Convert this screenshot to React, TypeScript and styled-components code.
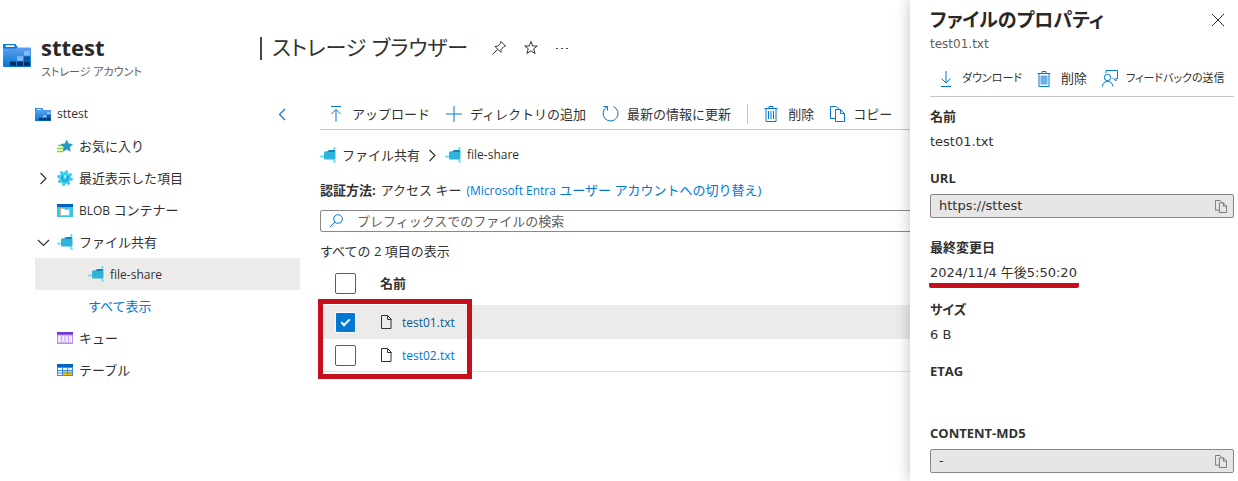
import React from 'react';
import styled, { createGlobalStyle } from 'styled-components';

const BLUE = '#0078d4';
const TEXT = '#323130';
const UI_FONT = '"Open Sans", "Noto Sans CJK JP", sans-serif';
const PANEL_FONT = '"DejaVu Sans", "Noto Sans CJK JP", sans-serif';

const GlobalStyle = createGlobalStyle`
  *, *::before, *::after { box-sizing: border-box; }
  body {
    margin: 0;
    background: #fff;
    color: ${TEXT};
    font: 13px/20px ${UI_FONT};
    overflow-x: hidden;
  }
  button { margin: 0; border: 0; padding: 0; background: none; font: inherit; color: inherit; text-align: left; }
  button, a { cursor: pointer; }
  h1, h2, p, ul, dl, dd { margin: 0; padding: 0; }
  svg { display: block; flex: none; }
`;

const Page = styled.div`
  position: relative;
  min-height: 100vh;
  overflow: hidden;
`;

const Header = styled.header`
  display: flex;
  align-items: flex-start;
  height: 98px;
  padding: 35px 0 0 3px;
`;

const ResourceIcon = styled.div`
  width: 38px;
  padding-top: 9px;
`;

const Resource = styled.div`
  width: 215px;
`;

const ResourceName = styled.h1`
  font-size: 22px;
  line-height: 25px;
  font-weight: 700;
  color: #292827;
`;

const ResourceKind = styled.p`
  font-size: 11px;
  line-height: 24px;
  font-feature-settings: 'palt';
  color: #605e5c;
`;

const BladeTitle = styled.h2`
  display: flex;
  gap: 10px;
  font-size: 21px;
  line-height: 25px;
  font-weight: 400;
  font-feature-settings: 'palt';
  white-space: nowrap;
`;

const Divider = styled.span`
  width: 2px;
  height: 23px;
  margin: 2px 0 0 4px;
  background: #484644;
`;

const HeaderActions = styled.div`
  display: flex;
  align-items: center;
  gap: 16px;
  height: 25px;
  margin-left: 23px;
`;

const Body = styled.div`
  display: flex;
  align-items: flex-start;
  gap: 20px;
  padding-left: 35px;
`;

const Sidebar = styled.nav`
  flex: none;
  width: 265px;
`;

const TreeHead = styled.div`
  display: flex;
  align-items: center;
  justify-content: space-between;
  height: 32px;
  padding-right: 11px;
`;

const Latin = styled.span`
  font-size: 12px;
`;

const TreeRoot = styled.button`
  display: flex;
  align-items: center;
  gap: 6px;
`;

const TreeItem = styled.button<{ $depth?: number; $selected?: boolean; $link?: boolean }>`
  display: flex;
  align-items: center;
  width: 100%;
  height: 32px;
  padding-left: ${(p) => (p.$depth === 2 ? 31 : 0)}px;
  background: ${(p) => (p.$selected ? '#edebe9' : 'transparent')};
  color: ${(p) => (p.$link ? BLUE : TEXT)};
`;

const TreeChevron = styled.span`
  width: 22px;
  padding-left: 2px;
`;

const TreeIcon = styled.span`
  width: 22px;
`;

const Main = styled.main`
  flex: 1;
  min-width: 0;
`;

const Toolbar = styled.div`
  display: flex;
  align-items: center;
  height: 32px;
  border-bottom: 1px solid #c8c6c4;
  white-space: nowrap;
`;

const ToolButton = styled.button<{ $gap?: number }>`
  display: flex;
  align-items: center;
  gap: ${(p) => p.$gap ?? 8}px;
  white-space: nowrap;
`;

const MainToolbar = styled(Toolbar)`
  gap: 16px;
  padding-left: 8px;
`;

const ToolSeparator = styled.span`
  width: 1px;
  height: 20px;
  background: #c8c6c4;
`;

const Breadcrumb = styled.nav`
  display: flex;
  align-items: center;
  gap: 6px;
  padding-top: 15px;
`;

const Crumb = styled.button`
  display: flex;
  align-items: center;
  gap: 6px;
`;

const Auth = styled.p`
  display: flex;
  gap: 5px;
  padding: 15px 0 9px;
  white-space: nowrap;
`;

const Link = styled.a<{ $dark?: boolean }>`
  color: ${(p) => (p.$dark ? '#005a9e' : BLUE)};
  text-decoration: none;
`;

const Search = styled.label`
  display: flex;
  align-items: center;
  gap: 14px;
  height: 22px;
  padding-left: 8px;
  border: 1px solid #8a8886;
  border-radius: 2px;
`;

const SearchInput = styled.input`
  flex: 1;
  min-width: 0;
  border: 0;
  padding: 0;
  outline: 0;
  font: 13px/18px ${UI_FONT};
  background: none;
  &::placeholder { color: #605e5c; opacity: 1; }
`;

const Count = styled.p`
  padding: 9px 0 3px;
`;

const TableArea = styled.div`
  position: relative;
`;

const FileTable = styled.table`
  width: 100%;
  border-collapse: collapse;
  th, td { padding: 0; text-align: left; vertical-align: middle; }
  th { height: 41px; padding-bottom: 2px; }
  td { height: 33px; padding-top: 1px; border-top: 1px solid #edebe9; }
  tbody tr:last-child td { border-bottom: 1px solid #e1dfdd; }
`;

const FileRow = styled.tr<{ $selected?: boolean }>`
  background: ${(p) => (p.$selected ? '#edebe9' : 'transparent')};
`;

const CheckCell = styled.td`
  width: 60px;
`;

const Check = styled.input`
  appearance: none;
  display: block;
  width: 21px;
  height: 21px;
  margin: 0 0 0 15px;
  border: 1px solid #605e5c;
  border-radius: 2px;
  background: #fff;
  &:checked {
    border-color: #fff;
    background: ${BLUE};
  }
  &:checked::after {
    content: '';
    display: block;
    width: 9px;
    height: 5px;
    margin: 6px 0 0 5px;
    border: solid #fff;
    border-width: 0 0 2px 2px;
    transform: rotate(-45deg);
  }
`;

const FileName = styled.span`
  display: flex;
  align-items: center;
  gap: 10px;
`;

const Highlight = styled.div`
  position: absolute;
  top: 35px;
  left: -2px;
  width: 154px;
  height: 80px;
  border: 5px solid #c50f1f;
  pointer-events: none;
`;

const Panel = styled.aside`
  position: absolute;
  top: 0;
  right: 0;
  bottom: 0;
  width: 328px;
  padding: 6px 4px 0 20px;
  background: #fff;
  box-shadow: 0 0 14px rgba(0, 0, 0, 0.25);
  font: 13px/20px ${PANEL_FONT};
  overflow: hidden;
`;

const PanelHead = styled.div`
  display: flex;
  align-items: center;
  justify-content: space-between;
  padding-right: 9px;
`;

const PanelTitle = styled.h2`
  font-size: 19px;
  line-height: 28px;
  font-weight: 700;
  font-feature-settings: 'palt';
  white-space: nowrap;
  color: #292827;
`;

const PanelSubtitle = styled.p`
  font-size: 12px;
  color: #605e5c;
`;

const PanelToolbar = styled(Toolbar)`
  gap: 15px;
  height: 43px;
  padding: 7px 0 0 8px;
  font-feature-settings: 'palt';
`;

const Kana = styled.span`
  font-size: 11px;
`;

const Fields = styled.dl`
  padding-top: 7px;
`;

const Field = styled.div<{ $boxed?: boolean }>`
  padding-bottom: ${(p) => (p.$boxed ? 17 : 14)}px;
`;

const Label = styled.dt`
  margin-bottom: 4px;
  line-height: 24px;
  font-weight: 700;
  font-family: ${UI_FONT};
  font-feature-settings: 'palt';
`;

const Value = styled.dd`
  height: 20px;
`;

const Marked = styled.span`
  display: inline-block;
  margin-left: -1px;
  padding: 0 2px 0 1px;
  border-bottom: 5px solid #c50f1f;
  border-radius: 2px;
  white-space: nowrap;
`;

const CopyBox = styled.dd`
  display: flex;
  align-items: center;
  height: 24px;
  padding: 0 6px 0 8px;
  border: 1px solid #8a8886;
  border-radius: 2px;
  background: #e6e6e6;
`;

const CopyInput = styled.input`
  flex: 1;
  min-width: 0;
  border: 0;
  padding: 0;
  outline: 0;
  background: none;
  color: ${TEXT};
  font: 13px/20px ${PANEL_FONT};
`;

const StorageIcon = ({ w, h }: { w: number; h: number }) => (
  <svg width={w} height={h} viewBox="0 0 28 23" preserveAspectRatio="none">
    <defs>
      <linearGradient id="folder" x1="0" y1="0" x2="0" y2="1">
        <stop offset="0" stopColor="#5ea0ef" />
        <stop offset="1" stopColor="#0078d4" />
      </linearGradient>
    </defs>
    <path d="M0 1Q0 0 1 0H12.500L14.500 3V5H0z" fill="#0078d4" />
    <rect x="2.500" y="1.200" width="9" height="1.800" rx="0.500" fill="#fff" />
    <path d="M0 4.500h12L14 3.500h14V22q0 1-1 1H1q-1 0-1-1z" fill="url(#folder)" />
    <rect x="21" y="7" width="6" height="4.500" fill="#83b9f9" />
    <rect x="21" y="12.300" width="6" height="4.500" fill="#0058a5" />
    <rect x="14" y="12.300" width="6" height="4.500" fill="#83b9f9" />
    <rect x="7" y="17.500" width="6" height="4.500" fill="#003067" />
    <rect x="14" y="17.500" width="6" height="4.500" fill="#003067" />
    <rect x="21" y="17.500" width="6" height="4.500" fill="#003067" />
  </svg>
);

const FavoriteIcon = () => (
  <svg width="16" height="14" viewBox="0 0 16 14">
    <path d="M1 6.500h5M0 9.500h6M0 12.500h6" stroke="#86d633" strokeWidth="1.300" />
    <path d="M9.700.5l1.900 4 4.400.6-3.200 3.100.8 4.500-3.900-2.100-4 2.100.8-4.500-3.200-3.100 4.500-.6z" fill="#2599c4" />
  </svg>
);

const RecentIcon = () => (
  <svg width="16" height="16" viewBox="0 0 16 16">
    <circle cx="8" cy="8" r="6.600" fill="none" stroke="#32c8ea" strokeWidth="2.400" strokeDasharray="2.600 2.584" />
    <circle cx="8" cy="8" r="5.900" fill="#32d0f2" />
    <path d="M5.800 6a3 3 0 1 0 4.400 0" fill="none" stroke="#1c93c4" strokeWidth="1.200" />
    <path d="M8 5v3" stroke="#e4faff" strokeWidth="1.200" />
  </svg>
);

const BlobIcon = () => (
  <svg width="16" height="13" viewBox="0 0 16 13">
    <rect width="16" height="13" rx="0.500" fill="#38c6ea" />
    <rect width="16" height="3" fill="#0067c0" />
    <path d="M3.500 4.500h3.500l1 1h4.500v6h-9z" fill="#fff" stroke="#e8a878" strokeWidth="0.800" />
  </svg>
);

const ShareIcon = () => (
  <svg width="16" height="16" viewBox="0 0 16 16">
    <path d="M1.500 9.500H5M14.500 1.500L13 4M14.500 14L13.500 12" stroke="#50d8f0" strokeWidth="1.200" />
    <path d="M4 5.500q0-1 1-1l3-.5q.5-1 1.500-1h4.500q1.500 0 1.500 1.500v6.500q0 1.500-1.500 1.500H5.500Q4 12.500 4 11z" fill="#2fb4d9" />
    <path d="M8.500 3.500q.5-.5 1.500-.5h4q1 0 1.400.8L14 5H8z" fill="#1b7fb5" />
    <circle cx="1.500" cy="9.500" r="1.200" fill="#50e6ff" />
    <circle cx="14.500" cy="1.200" r="1.100" fill="#50e6ff" />
    <circle cx="14.500" cy="14.500" r="1.200" fill="#50e6ff" />
  </svg>
);

const QueueIcon = () => (
  <svg width="16" height="12" viewBox="0 0 16 12">
    <rect width="16" height="12" rx="0.500" fill="#b48df0" />
    <rect width="16" height="2.500" fill="#7339cc" />
    <rect x="1" y="3.500" width="14" height="7" fill="#efe6fd" />
    <path d="M4.500 3.500v7M8 3.500v7M11.500 3.500v7" stroke="#c5a4f5" />
  </svg>
);

const TableIcon = () => (
  <svg width="16" height="12" viewBox="0 0 16 12">
    <rect width="16" height="12" rx="0.500" fill="#3f8fdc" />
    <rect width="16" height="3" fill="#0067c0" />
    <path d="M1 4h4v2H1zM1 7h4v1.500H1zM1 9.500h4V11H1zM6 4h4v2H6zM11 4h4v2h-4z" fill="#eef6ff" />
    <path d="M6 7h4v1.500H6zM6 9.500h4V11H6zM11 7h4v1.500h-4zM11 9.500h4V11h-4z" fill="#ffca00" />
  </svg>
);

const Chevron = ({ dir, color = '#323130' }: { dir: 'left' | 'right' | 'down'; color?: string }) => {
  const d = { left: 'M9 1L3.500 6.500 9 12', right: 'M3.500 1L9 6.500 3.500 12', down: 'M1 4l5.500 5.500L12 4' }[dir];
  return (
    <svg width="13" height="13" viewBox="0 0 13 13" fill="none" stroke={color} strokeWidth="1.200">
      <path d={d} />
    </svg>
  );
};

const Stroke = styled.svg.attrs({ fill: 'none' })<{ $color?: string }>`
  stroke: ${(p) => p.$color ?? BLUE};
  stroke-width: 1;
`;

const PinIcon = () => (
  <Stroke width="16" height="16" viewBox="0 0 16 16" $color="#323130">
    <path d="M10 1.500l4.500 4.500-1.600.6-2.700 2.800-.4 2.900L4 6.500l2.900-.4 2.600-2.700zM6.500 9.500L1.500 14.500" />
  </Stroke>
);

const StarIcon = () => (
  <Stroke width="16" height="16" viewBox="0 0 16 16" $color="#323130">
    <path d="M8 1.500l1.700 4.500h4.600l-3.600 2.800 1.400 4.700L8 10.800l-4.100 2.700 1.400-4.700L1.700 6h4.600z" />
  </Stroke>
);

const MoreIcon = () => (
  <svg width="14" height="16" viewBox="0 0 14 16" fill="#484644">
    <rect x="1" y="8" width="2" height="1" />
    <rect x="6" y="8" width="2" height="1" />
    <rect x="11" y="8" width="2" height="1" />
  </svg>
);

const UploadIcon = () => (
  <Stroke width="16" height="16" viewBox="0 0 16 16">
    <path d="M3 .5h10M8 3.500v12M3.500 8L8 3.500 12.500 8" />
  </Stroke>
);

const PlusIcon = () => (
  <Stroke width="16" height="16" viewBox="0 0 16 16">
    <path d="M8 0v16M0 8h16" />
  </Stroke>
);

const RefreshIcon = () => (
  <Stroke width="17" height="17" viewBox="0 0 17 17">
    <path d="M11.500 1.600A7.500 7.500 0 1 1 5 1.900M1.500 1.500H5.500V5.500" />
  </Stroke>
);

const TrashIcon = ({ filled }: { filled?: boolean }) => (
  <Stroke width="14" height="16" viewBox="0 0 14 16">
    <path d="M.5 2.500h13M5 2.500v-2h4v2M2 2.500v13h10v-13" />
    {filled ? <rect x="3.500" y="4.500" width="7" height="9" fill="#69afe5" stroke="none" /> : <path d="M4.500 5v8M7 5v8M9.500 5v8" />}
  </Stroke>
);

const CopyIcon = ({ small }: { small?: boolean }) => (
  <Stroke width={small ? 12 : 15} height={small ? 13 : 16} viewBox="0 0 15 16" $color={small ? '#605e5c' : BLUE}>
    <path d="M5 12.500H.5V.5h5.800l2.500 2.500M5.500 3.500h5L14.500 7.500v8h-9zM10.500 3.500v4h4" />
  </Stroke>
);

const SearchIcon = () => (
  <Stroke width="14" height="14" viewBox="0 0 14 14">
    <circle cx="9" cy="5" r="4.300" />
    <path d="M6 8L.8 13.200" />
  </Stroke>
);

const FileIcon = () => (
  <Stroke width="12" height="14" viewBox="0 0 12 14" $color="#323130">
    <path d="M1.500.5h6l3.500 3.500v9.500h-9.500zM7.500.5v4h4" />
  </Stroke>
);

const DownloadIcon = () => (
  <Stroke width="16" height="16" viewBox="0 0 16 16">
    <path d="M3 15.500h10M8 0v12M3.500 7.500L8 12l4.500-4.500" />
  </Stroke>
);

const FeedbackIcon = () => (
  <Stroke width="16" height="17" viewBox="0 0 16 17">
    <path d="M4 3V.5h11.500V8.500h-1.500v2.500L11.500 8.500h-1" />
    <circle cx="5.500" cy="7.500" r="3.200" />
    <path d="M.5 16.500a5.200 5.200 0 0 1 10.400 0" />
  </Stroke>
);

const CloseIcon = () => (
  <Stroke width="14" height="14" viewBox="0 0 14 14" $color="#323130">
    <path d="M1 1l12 12M13 1L1 13" />
  </Stroke>
);

type Node = {
  label: React.ReactNode;
  icon?: React.ReactNode;
  chevron?: 'right' | 'down';
  depth?: number;
  selected?: boolean;
  link?: boolean;
};

const nodes: Node[] = [
  { label: 'お気に入り', icon: <FavoriteIcon /> },
  { label: '最近表示した項目', icon: <RecentIcon />, chevron: 'right' },
  { label: <><Latin>BLOB</Latin> コンテナー</>, icon: <BlobIcon /> },
  { label: 'ファイル共有', icon: <ShareIcon />, chevron: 'down' },
  { label: <Latin>file-share</Latin>, icon: <ShareIcon />, depth: 2, selected: true },
  { label: 'すべて表示', depth: 2, link: true },
  { label: 'キュー', icon: <QueueIcon /> },
  { label: 'テーブル', icon: <TableIcon /> },
];

const files = [
  { name: 'test01.txt', selected: true },
  { name: 'test02.txt', selected: false },
];

export default function App() {
  return (
    <Page>
      <GlobalStyle />
      <Header>
        <ResourceIcon><StorageIcon w={28} h={23} /></ResourceIcon>
        <Resource>
          <ResourceName>sttest</ResourceName>
          <ResourceKind>ストレージ アカウント</ResourceKind>
        </Resource>
        <BladeTitle><Divider />ストレージ ブラウザー</BladeTitle>
        <HeaderActions>
          <button aria-label="ピン留め"><PinIcon /></button>
          <button aria-label="お気に入りに追加"><StarIcon /></button>
          <button aria-label="その他"><MoreIcon /></button>
        </HeaderActions>
      </Header>

      <Body>
        <Sidebar>
          <TreeHead>
            <TreeRoot><StorageIcon w={16} h={13} /><Latin>sttest</Latin></TreeRoot>
            <button aria-label="折りたたむ"><Chevron dir="left" color={BLUE} /></button>
          </TreeHead>
          {nodes.map((n, i) => (
            <TreeItem key={i} $depth={n.depth} $selected={n.selected} $link={n.link}>
              <TreeChevron>{n.chevron && <Chevron dir={n.chevron} />}</TreeChevron>
              {n.icon && <TreeIcon>{n.icon}</TreeIcon>}
              <span>{n.label}</span>
            </TreeItem>
          ))}
        </Sidebar>

        <Main>
          <MainToolbar>
            <ToolButton><UploadIcon />アップロード</ToolButton>
            <ToolButton><PlusIcon />ディレクトリの追加</ToolButton>
            <ToolButton><RefreshIcon />最新の情報に更新</ToolButton>
            <ToolSeparator />
            <ToolButton $gap={10}><TrashIcon />削除</ToolButton>
            <ToolButton><CopyIcon />コピー</ToolButton>
          </MainToolbar>

          <Breadcrumb>
            <Crumb><ShareIcon />ファイル共有</Crumb>
            <Chevron dir="right" />
            <Crumb><ShareIcon /><Latin>file-share</Latin></Crumb>
          </Breadcrumb>

          <Auth>
            <b>認証方法:</b>
            <span>アクセス キー</span>
            <Link href="#switch"><Latin>(Microsoft Entra</Latin> ユーザー アカウントへの切り替え)</Link>
          </Auth>

          <Search>
            <SearchIcon />
            <SearchInput type="text" placeholder="プレフィックスでのファイルの検索" />
          </Search>
          <Count>すべての 2 項目の表示</Count>

          <TableArea>
            <FileTable>
              <thead>
                <tr>
                  <CheckCell as="th"><Check type="checkbox" aria-label="すべて選択" /></CheckCell>
                  <th>名前</th>
                </tr>
              </thead>
              <tbody>
                {files.map((f) => (
                  <FileRow key={f.name} $selected={f.selected}>
                    <CheckCell><Check type="checkbox" aria-label={f.name} defaultChecked={f.selected} /></CheckCell>
                    <td>
                      <FileName>
                        <FileIcon />
                        <Link href={`#${f.name}`} $dark={f.selected}><Latin>{f.name}</Latin></Link>
                      </FileName>
                    </td>
                  </FileRow>
                ))}
              </tbody>
            </FileTable>
            <Highlight />
          </TableArea>
        </Main>
      </Body>

      <Panel>
        <PanelHead>
          <PanelTitle>ファイルのプロパティ</PanelTitle>
          <button aria-label="閉じる"><CloseIcon /></button>
        </PanelHead>
        <PanelSubtitle>test01.txt</PanelSubtitle>
        <PanelToolbar>
          <ToolButton><DownloadIcon /><Kana>ダウンロード</Kana></ToolButton>
          <ToolButton $gap={10}><TrashIcon filled />削除</ToolButton>
          <ToolButton><FeedbackIcon /><Kana>フィードバックの送信</Kana></ToolButton>
        </PanelToolbar>
        <Fields>
          <Field><Label>名前</Label><Value>test01.txt</Value></Field>
          <Field $boxed>
            <Label>URL</Label>
            <CopyBox>
              <CopyInput aria-label="URL" readOnly value="https://sttest" />
              <button aria-label="URL をコピー"><CopyIcon small /></button>
            </CopyBox>
          </Field>
          <Field><Label>最終変更日</Label><Value><Marked>2024/11/4 午後5:50:20</Marked></Value></Field>
          <Field><Label>サイズ</Label><Value>6 B</Value></Field>
          <Field><Label>ETAG</Label><Value /></Field>
          <Field $boxed>
            <Label>CONTENT-MD5</Label>
            <CopyBox>
              <CopyInput aria-label="CONTENT-MD5" readOnly value="-" />
              <button aria-label="CONTENT-MD5 をコピー"><CopyIcon small /></button>
            </CopyBox>
          </Field>
        </Fields>
      </Panel>
    </Page>
  );
}
